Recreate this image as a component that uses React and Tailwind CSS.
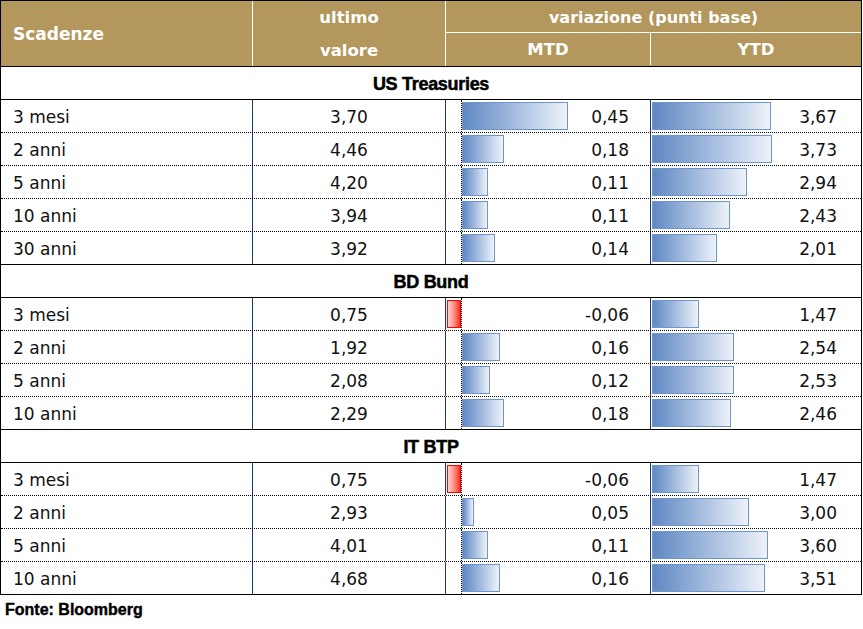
import React from "react";

const sections = [
  {
    title: "US Treasuries",
    rows: [
      ["3 mesi", "3,70", 0.45, "0,45", 3.67, "3,67"],
      ["2 anni", "4,46", 0.18, "0,18", 3.73, "3,73"],
      ["5 anni", "4,20", 0.11, "0,11", 2.94, "2,94"],
      ["10 anni", "3,94", 0.11, "0,11", 2.43, "2,43"],
      ["30 anni", "3,92", 0.14, "0,14", 2.01, "2,01"],
    ],
  },
  {
    title: "BD Bund",
    rows: [
      ["3 mesi", "0,75", -0.06, "-0,06", 1.47, "1,47"],
      ["2 anni", "1,92", 0.16, "0,16", 2.54, "2,54"],
      ["5 anni", "2,08", 0.12, "0,12", 2.53, "2,53"],
      ["10 anni", "2,29", 0.18, "0,18", 2.46, "2,46"],
    ],
  },
  {
    title: "IT BTP",
    rows: [
      ["3 mesi", "0,75", -0.06, "-0,06", 1.47, "1,47"],
      ["2 anni", "2,93", 0.05, "0,05", 3.0, "3,00"],
      ["5 anni", "4,01", 0.11, "0,11", 3.6, "3,60"],
      ["10 anni", "4,68", 0.16, "0,16", 3.51, "3,51"],
    ],
  },
];

const MTD_SCALE = 235;
const YTD_SCALE = 32.3;

function MtdBar({ v }) {
  const w = Math.abs(v) * MTD_SCALE;
  if (v >= 0) {
    return (
      <div
        className="absolute top-[2px] h-[28px] border border-[#6f95ca] bg-gradient-to-r from-[#5f88c3] to-[#eef2f9]"
        style={{ left: 16, width: w }}
      />
    );
  }
  return (
    <div
      className="absolute top-[2px] h-[28px] border border-[#ff0000] bg-gradient-to-r from-[#ffd6d6] to-[#ff1a1a]"
      style={{ left: 15 - w, width: w }}
    />
  );
}

function YtdBar({ v }) {
  return (
    <div
      className="absolute top-[2px] h-[28px] border border-[#6f95ca] bg-gradient-to-r from-[#5f88c3] to-[#eef2f9]"
      style={{ left: 1, width: v * YTD_SCALE }}
    />
  );
}

export default function App() {
  const bodyFont = { fontFamily: '"DejaVu Sans", sans-serif' };
  return (
    <div className="w-[863px] h-[629px] bg-white" style={bodyFont}>
      <div className="w-[862px] border-t border-l border-r border-black">
        {/* Header */}
        <div className="flex h-[66px] bg-[#b3975d] border-b border-black text-white font-bold text-[16.5px]">
          <div className="w-[252px] border-r border-white flex items-center pl-[12px] pt-[2px] text-[17px]">
            Scadenze
          </div>
          <div className="w-[193px] border-r border-white flex flex-col">
            <div className="h-[32px] flex items-center justify-center pt-[2px]">ultimo</div>
            <div className="h-[33px] flex items-center justify-center pt-[3px]">valore</div>
          </div>
          <div className="flex-1 flex flex-col">
            <div className="h-[32px] border-b border-white flex items-center justify-center pt-[2px] text-[16px]">
              variazione (punti base)
            </div>
            <div className="h-[32px] flex">
              <div className="w-[205px] border-r border-white flex items-center justify-center pt-[3px]">
                MTD
              </div>
              <div className="flex-1 flex items-center justify-center pt-[3px]">YTD</div>
            </div>
          </div>
        </div>

        {/* Body */}
        {sections.map((s) => (
          <div key={s.title}>
            <div
              className="h-[33px] border-b border-black flex items-center justify-center pt-[2px] text-[18px] font-bold tracking-[-0.3px] text-black [-webkit-text-stroke:0.5px_black]"
              style={{ fontFamily: '"Liberation Sans", Arial, sans-serif' }}
            >
              {s.title}
            </div>
            {s.rows.map((r, i) => {
              const last = i === s.rows.length - 1;
              return (
                <div
                  key={r[0]}
                  className={
                    "flex h-[33px] border-b border-black text-[17px] text-[#111] " +
                    (last ? "border-solid" : "border-dotted")
                  }
                >
                  <div className="w-[252px] border-r border-solid border-[#1b3a5c] flex items-center pl-[12px] pt-[4px]">
                    {r[0]}
                  </div>
                  <div className="w-[193px] border-r border-solid border-[#1b3a5c] flex items-center justify-center pt-[4px]">
                    {r[1]}
                  </div>
                  <div className="w-[205px] border-r border-solid border-[#1b3a5c] relative flex items-center justify-end pr-[21px] pt-[4px]">
                    <div className="absolute left-[15px] top-0 h-[32px] border-l border-dotted border-black" />
                    <MtdBar v={r[2]} />
                    <span className="relative">{r[3]}</span>
                  </div>
                  <div className="flex-1 relative flex items-center justify-end pr-[24px] pt-[4px]">
                    <YtdBar v={r[4]} />
                    <span className="relative">{r[5]}</span>
                  </div>
                </div>
              );
            })}
          </div>
        ))}
      </div>
      <div
        className="pl-[5px] pt-[5px] leading-[20px] text-[16px] font-bold text-black [-webkit-text-stroke:0.4px_black]"
        style={{ fontFamily: '"Liberation Sans", Arial, sans-serif' }}
      >
        Fonte: Bloomberg
      </div>
    </div>
  );
}
